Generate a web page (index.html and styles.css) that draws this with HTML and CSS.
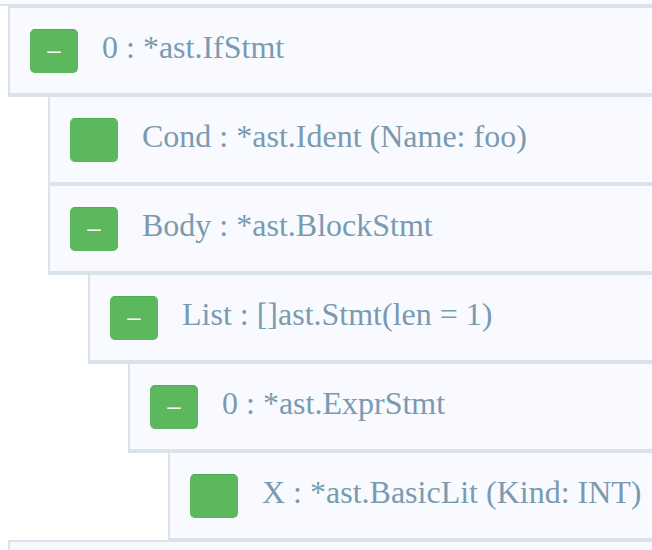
FILE: index.html
```
<!DOCTYPE html>
<html>
<head>
<meta charset="utf-8">
<link rel="stylesheet" href="styles.css">
</head>
<body>
<div class="tree">
  <div class="prev"></div>
  <div class="level top">
    <div class="node">
      <div class="row open"><span class="toggle">–</span><span class="label">0 : *ast.IfStmt</span></div>
      <div class="level">
        <div class="node">
          <div class="row"><span class="toggle"></span><span class="label">Cond : *ast.Ident (Name: foo)</span></div>
        </div>
        <div class="node">
          <div class="row open"><span class="toggle">–</span><span class="label">Body : *ast.BlockStmt</span></div>
          <div class="level">
            <div class="node">
              <div class="row open"><span class="toggle">–</span><span class="label">List : []ast.Stmt(len = 1)</span></div>
              <div class="level">
                <div class="node">
                  <div class="row open"><span class="toggle">–</span><span class="label">0 : *ast.ExprStmt</span></div>
                  <div class="level">
                    <div class="node">
                      <div class="row"><span class="toggle"></span><span class="label">X : *ast.BasicLit (Kind: INT)</span></div>
                    </div>
                  </div>
                </div>
              </div>
            </div>
          </div>
        </div>
      </div>
    </div>
    <div class="node">
      <div class="row stub"></div>
    </div>
  </div>
</div>
</body>
</html>
```

FILE: styles.css
```
html, body {
  margin: 0;
  padding: 0;
  overflow: hidden;
  background: #ffffff;
}
.tree {
  width: 780px;
}
.prev {
  height: 4px;
  background: #f8faff;
  border-bottom: 2px solid #dae3ea;
}
.level {
  margin-left: 40px;
}
.level.top {
  margin-left: 8px;
}
.row {
  display: flex;
  align-items: flex-start;
  gap: 24px;
  padding: 21px 20px 20px 20px;
  border: 2px solid #dae3ea;
  background: #f8faff;
}
.row.open {
  border-bottom-width: 4px;
}
.level > .node:first-child > .row {
  border-top-width: 0;
}
.level.top > .node:first-child > .row {
  border-top-width: 2px;
}
.row.stub {
  height: 44px;
}
.toggle {
  flex: none;
  box-sizing: border-box;
  width: 48px;
  height: 44px;
  background: #5cb85c;
  border: 1px solid #5cb85c;
  border-top-color: #4cae4c;
  border-radius: 5px;
  color: #ffffff;
  font-family: "Liberation Sans", Arial, sans-serif;
  font-size: 24px;
  line-height: 40px;
  text-align: center;
}
.label {
  font-family: "Liberation Serif", "Times New Roman", serif;
  font-size: 32px;
  line-height: 36px;
  color: #7a9ab0;
  white-space: nowrap;
}
```
